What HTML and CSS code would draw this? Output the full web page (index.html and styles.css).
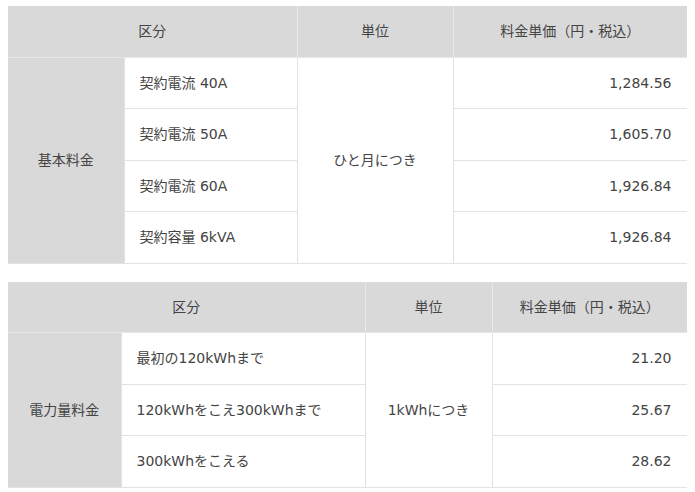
FILE: index.html
```html
<!DOCTYPE html>
<html lang="ja">
<head>
<meta charset="utf-8">
<link rel="stylesheet" href="styles.css">
</head>
<body>
<table class="rate rate-basic">
  <colgroup>
    <col class="c1"><col class="c2"><col class="c3"><col class="c4">
  </colgroup>
  <thead>
    <tr><th colspan="2">区分</th><th>単位</th><th>料金単価（円・税込）</th></tr>
  </thead>
  <tbody>
    <tr><th class="rowhead" rowspan="4">基本料金</th><td>契約電流 40A</td><td class="unit" rowspan="4">ひと月につき</td><td class="num">1,284.56</td></tr>
    <tr><td>契約電流 50A</td><td class="num">1,605.70</td></tr>
    <tr><td>契約電流 60A</td><td class="num">1,926.84</td></tr>
    <tr><td>契約容量 6kVA</td><td class="num">1,926.84</td></tr>
  </tbody>
</table>

<table class="rate rate-energy">
  <colgroup>
    <col class="c1"><col class="c2"><col class="c3"><col class="c4">
  </colgroup>
  <thead>
    <tr><th colspan="2">区分</th><th>単位</th><th>料金単価（円・税込）</th></tr>
  </thead>
  <tbody>
    <tr><th class="rowhead" rowspan="3">電力量料金</th><td>最初の120kWhまで</td><td class="unit" rowspan="3">1kWhにつき</td><td class="num">21.20</td></tr>
    <tr><td>120kWhをこえ300kWhまで</td><td class="num">25.67</td></tr>
    <tr><td>300kWhをこえる</td><td class="num">28.62</td></tr>
  </tbody>
</table>
</body>
</html>
```
FILE: styles.css
```css
html, body {
  background: #ffffff;
}
body {
  margin: 6px 8px;
  font-family: "DejaVu Sans", "Noto Sans CJK JP", sans-serif;
  font-size: 14px;
  color: #444444;
}
.rate {
  width: 679px;
  border-collapse: collapse;
  table-layout: fixed;
}
.rate + .rate {
  margin-top: 18px;
}
.rate th,
.rate td {
  padding: 15px 15px;
  line-height: 20.5px;
  border: 1px solid #dfe2e6;
  font-weight: normal;
  text-align: left;
  vertical-align: middle;
}
.rate thead th {
  background: #d9d9d9;
  text-align: center;
  border-top: none;
  border-left: none;
  border-right: 1px solid #e8e8e8;
  border-bottom: 1px solid #e4e8ee;
}
.rate thead th:last-child {
  border-right: none;
}
.rate .rowhead {
  background: #d9d9d9;
  text-align: center;
  border-left: none;
}
.rate .unit {
  text-align: center;
}
.rate .num {
  text-align: right;
}
.rate-basic .c1 { width: 116px; }
.rate-basic .c2 { width: 173px; }
.rate-basic .c3 { width: 156px; }
.rate-basic .c4 { width: 234px; }
.rate-energy .c1 { width: 113px; }
.rate-energy .c2 { width: 244px; }
.rate-energy .c3 { width: 127px; }
.rate-energy .c4 { width: 195px; }
```
